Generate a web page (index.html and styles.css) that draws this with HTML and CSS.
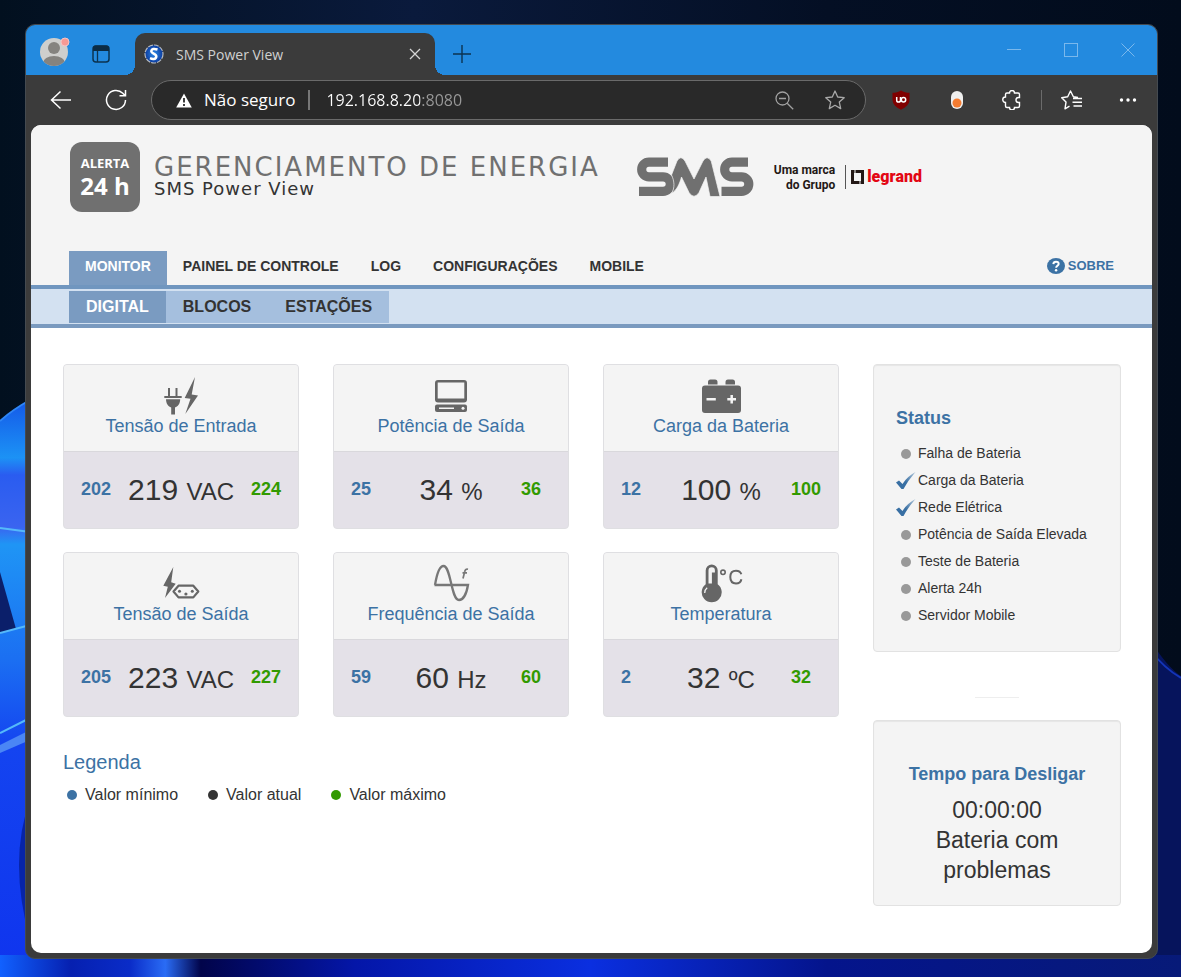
FILE: index.html
```html
<!DOCTYPE html>
<html lang="pt-BR">
<head>
<meta charset="utf-8">
<meta name="viewport" content="width=device-width, initial-scale=1">
<title>SMS Power View</title>
<link rel="stylesheet" href="styles.css">
</head>
<body>
<div class="desktop">
  <svg class="wallpaper" viewBox="0 0 1181 977" preserveAspectRatio="none" aria-hidden="true">
    <defs>
      <linearGradient id="night" x1="0" y1="0" x2="1" y2="0">
        <stop offset="0" stop-color="#02101f"/><stop offset=".35" stop-color="#0a1a3c"/><stop offset=".7" stop-color="#040f24"/><stop offset="1" stop-color="#020c1c"/>
      </linearGradient>
      <linearGradient id="petal" x1="0" y1="0" x2="0" y2="1">
        <stop offset="0" stop-color="#1458e8"/><stop offset=".1" stop-color="#1c92f5"/><stop offset=".13" stop-color="#2a5cf0"/><stop offset=".22" stop-color="#3a64f0"/><stop offset=".25" stop-color="#1f95f5"/><stop offset=".45" stop-color="#1b6ff2"/><stop offset=".6" stop-color="#1444f0"/><stop offset="1" stop-color="#0f34ee"/>
      </linearGradient>
      <linearGradient id="floor" x1="0" y1="0" x2="1" y2="0">
        <stop offset="0" stop-color="#1161ff"/><stop offset=".06" stop-color="#0620b0"/><stop offset=".11" stop-color="#0a2cc8"/><stop offset=".14" stop-color="#2a6cf5"/><stop offset=".17" stop-color="#01044a"/><stop offset=".3" stop-color="#0416a8"/><stop offset=".5" stop-color="#0a2fe0"/><stop offset=".7" stop-color="#04148c"/><stop offset="1" stop-color="#071a78"/>
      </linearGradient>
    </defs>
    <rect width="1181" height="977" fill="url(#night)"/>
    <path d="M0 421 Q12 410 30 400 V977 H0Z" fill="url(#petal)"/>
    <path d="M0 421 Q12 410 30 400" fill="none" stroke="#2f86f5" stroke-width="2"/>
    <path d="M0 572 L16 629 L0 633Z" fill="#0b1f6a"/>
    <path d="M0 528 L30 532 M0 633 L30 625 M0 733 L30 718" fill="none" stroke="#55b9fa" stroke-width="2"/>
    <path d="M0 745 L30 730 V740 L0 753Z" fill="#4a86f5"/>
    <path d="M30 800 Q8 860 30 940Z" fill="#0724a8"/>
    <path d="M1150 640 Q1168 668 1181 676 V977 H1150Z" fill="#06145c"/>
    <path d="M1150 650 Q1164 668 1181 678" fill="none" stroke="#1435b8" stroke-width="2"/>
    <rect y="955" width="1181" height="22" fill="url(#floor)"/>
  </svg>

  <div class="window">
    <header class="tab-strip">
      <button class="profile" aria-label="Perfil">
        <svg width="32" height="32" viewBox="0 0 32 32"><defs><clipPath id="face"><circle cx="15" cy="17" r="14"/></clipPath></defs><circle cx="15" cy="17" r="14" fill="#cfcfcd"/><g clip-path="url(#face)" fill="#85837f"><circle cx="15" cy="13" r="6"/><ellipse cx="15" cy="28" rx="11" ry="7"/></g><circle cx="26" cy="7" r="4" fill="#f79a94" stroke="#f6c4c4"/></svg>
      </button>
      <button class="workspaces" aria-label="Menu de guias">
        <svg width="20" height="20" viewBox="0 0 20 20"><rect x="2" y="2" width="16" height="16" rx="3" fill="none" stroke="#0c3350" stroke-width="1.5"/><path d="M2 7V4a2.500 2.500 0 0 1 2.500-2.500h11A2.500 2.500 0 0 1 18 4v3z" fill="#0c2c44"/><path d="M6.500 7v11" stroke="#0c3350" stroke-width="1.300"/></svg>
      </button>
      <div class="tab">
        <svg width="20" height="20" viewBox="0 0 20 20" aria-hidden="true"><defs><radialGradient id="fav"><stop offset="0" stop-color="#2d8be8"/><stop offset="1" stop-color="#0b3a9e"/></radialGradient></defs><circle cx="10" cy="10" r="9" fill="url(#fav)" stroke="#b4bac2" stroke-width="1.200" stroke-dasharray="5 1"/><path d="M13.500 5.500Q8 3.800 7.300 7c-.4 2.700 5.500 2.500 5 5.700-.5 2.900-4 2.600-6.300 1.500" fill="none" stroke="#fff" stroke-width="2.500"/></svg>
        <span class="tab-title">SMS Power View</span>
        <button class="tab-close" aria-label="Fechar guia"><svg width="12" height="12" viewBox="0 0 12 12"><path d="M1 1l10 10M11 1L1 11" stroke="#d5d5d5" stroke-width="1.300"/></svg></button>
      </div>
      <button class="new-tab" aria-label="Nova guia"><svg width="18" height="18" viewBox="0 0 18 18"><path d="M9 0v18M0 9h18" stroke="#0c3350" stroke-width="1.400"/></svg></button>
      <div class="window-buttons">
        <button aria-label="Minimizar"><svg width="14" height="14" viewBox="0 0 14 14"><path d="M0 6.500h14" stroke="#7ab8ec"/></svg></button>
        <button aria-label="Maximizar"><svg width="14" height="14" viewBox="0 0 14 14"><rect x=".5" y=".5" width="13" height="13" fill="none" stroke="#7ab8ec"/></svg></button>
        <button aria-label="Fechar"><svg width="14" height="14" viewBox="0 0 14 14"><path d="M.5.5l13 13M13.500.5l-13 13" stroke="#7ab8ec"/></svg></button>
      </div>
    </header>

    <div class="toolbar">
      <button class="back" aria-label="Voltar"><svg width="22" height="20" viewBox="0 0 22 20"><path d="M21 10H2M10.500 1.500L1.500 10l9 8.500" fill="none" stroke="#fff" stroke-width="1.500"/></svg></button>
      <button class="reload" aria-label="Recarregar"><svg width="22" height="22" viewBox="0 0 22 22"><path d="M20.500 11A9.500 9.500 0 1 1 17.800 4.300L20 6.500M20.500 1v5.800h-6" fill="none" stroke="#fff" stroke-width="1.500"/></svg></button>
      <div class="address">
        <svg width="16" height="15" viewBox="0 0 16 15" aria-hidden="true"><path d="M8 .5L15.800 14.500H.2z" fill="#fff"/><path d="M8 5v4.500M8 11v2" stroke="#292929" stroke-width="1.800"/></svg>
        <span class="insecure">Não seguro</span>
        <input class="url" type="text" value="192.168.8.20:8080" aria-label="Endereço">
        <button class="zoom-out" aria-label="Zoom"><svg width="19" height="19" viewBox="0 0 19 19"><g fill="none" stroke="#a0a0a0" stroke-width="1.300"><circle cx="7.500" cy="7.500" r="6.500"/><path d="M12.200 12.200l6 6M4 7.500h7"/></g></svg></button>
        <button class="favorite" aria-label="Adicionar aos favoritos"><svg width="20" height="20" viewBox="0 0 20 20"><path d="M10 1l2.700 6 6.500.7-4.900 4.400 1.400 6.500-5.700-3.300-5.700 3.300 1.400-6.500L.8 7.700 7.300 7z" fill="none" stroke="#a8a8a8" stroke-width="1.300" stroke-linejoin="round"/></svg></button>
      </div>
      <div class="extensions">
        <button aria-label="Bloqueador"><svg width="20" height="20" viewBox="0 0 20 20"><path d="M10 .5c2.500 1.800 5.500 2.300 8.500 2.300v6.700c0 5-4 8-8.500 10.200C5.500 17.500 1.500 14.500 1.500 9.500V2.800C4.500 2.800 7.500 2.300 10 .5z" fill="#800000"/><path d="M5.700 7v3.200a1.900 1.900 0 0 0 3.800 0V7" fill="none" stroke="#fff" stroke-width="1.500"/><circle cx="12.500" cy="9.700" r="2.200" fill="none" stroke="#fff" stroke-width="1.500"/></svg></button>
        <button aria-label="Extensão"><svg width="14" height="20" viewBox="0 0 14 20"><rect x="1" y="1" width="12" height="18" rx="6" fill="#efefef"/><circle cx="7" cy="13" r="4.500" fill="#f57c31"/></svg></button>
        <button aria-label="Extensões"><svg width="20" height="20" viewBox="0 0 20 20"><path d="M3.500 7V4.500a1.500 1.500 0 0 1 1.500-1.500h2.500a2.500 2.500 0 0 1 5 0H16a1.500 1.500 0 0 1 1.500 1.500V7.500h-1a2.300 2.300 0 0 0 0 5h1v3.500a1.500 1.500 0 0 1-1.500 1.500h-3.500a2.500 2.500 0 0 1-5 0H5A1.500 1.500 0 0 1 3.500 16v-3.500a2.500 2.500 0 0 1 0-5.500z" fill="none" stroke="#fff" stroke-width="1.400"/></svg></button>
        <span class="divider"></span>
        <button aria-label="Favoritos"><svg width="22" height="20" viewBox="0 0 22 20"><path d="M17 7.500l-4.600-.7L9.500 1 6.700 6.800l-6 .9 4.300 4.400L4 18.800l4.500-2.600M12 8.500h9M11.500 12.300H21M12.500 16H21" fill="none" stroke="#fff" stroke-width="1.400" stroke-linejoin="round"/></svg></button>
        <button aria-label="Configurações e mais"><svg width="18" height="4" viewBox="0 0 18 4"><g fill="#fff"><circle cx="2.500" cy="2" r="1.700"/><circle cx="9" cy="2" r="1.700"/><circle cx="15.500" cy="2" r="1.700"/></g></svg></button>
      </div>
    </div>

    <div class="page">
      <div class="masthead">
        <div class="branding">
          <div class="alert-badge"><span class="alert-word">ALERTA</span><span class="alert-hours">24 h</span></div>
          <div class="product"><span class="product-area">GERENCIAMENTO DE ENERGIA</span><h1 class="product-name">SMS Power View</h1></div>
          <svg class="sms-logo" width="117" height="40" viewBox="0 0 117 40" role="img" aria-label="SMS"><g fill="none" stroke="#707070" stroke-width="9.200"><path d="M31 5.200H12a7.300 7.300 0 0 0 0 14.600h14a7.300 7.300 0 0 1 0 14.600H2"/><path d="M111 5.200H95a7.300 7.300 0 0 0 0 14.600h9.500a7.300 7.300 0 0 1 0 14.600H84.500"/></g><path d="M34.500 36.500C38 31 37.500 24 34.500 18L40 4Q43.800 -2.500 48 4L57 22 66 4Q70 -2.500 74.200 4L83 39.500H73L69 20 62 35.500Q57 43 52 35.500L44.500 20C42.500 27 40 33 34.500 36.500z" fill="#707070" stroke="#f4f4f4" stroke-width=".7"/></svg>
          <div class="group"><span>Uma marca</span><span>do Grupo</span></div>
          <div class="legrand"><svg width="13" height="14" viewBox="0 0 13 14" aria-hidden="true"><path d="M1.500 1.500h10v11h-10z" fill="none" stroke="#231815" stroke-width="3"/><path d="M4 0v5M9 9v5" stroke="#f4f4f4"/></svg><span>legrand</span></div>
        </div>
        <nav class="main-nav" aria-label="Principal">
          <a class="active" href="#monitor">MONITOR</a><a href="#painel">PAINEL DE CONTROLE</a><a href="#log">LOG</a><a href="#config">CONFIGURAÇÕES</a><a href="#mobile">MOBILE</a>
          <a class="about" href="#sobre"><svg width="18" height="16" viewBox="0 0 18 16" aria-hidden="true"><ellipse cx="9" cy="8" rx="9" ry="8" fill="#3c72a4"/><path d="M6.300 6.200Q6.500 3.800 9 3.800q2.700 0 2.700 2.200c0 1.700-2.600 1.600-2.600 3.800" fill="none" stroke="#fff" stroke-width="1.900"/><circle cx="9.100" cy="12.200" r="1.200" fill="#fff"/></svg>SOBRE</a>
        </nav>
      </div>
      <nav class="sub-nav" aria-label="Monitor">
        <a class="active" href="#digital">DIGITAL</a><a href="#blocos">BLOCOS</a><a href="#estacoes">ESTAÇÕES</a>
      </nav>

      <main class="content">
        <div class="readings">
          <div class="cards">
            <section class="card">
              <div class="card-head"><svg width="48" height="40" viewBox="0 0 48 40" fill="#666" aria-hidden="true"><path d="M12 12v9M19.500 12v9" stroke="#666" stroke-width="2"/><path d="M7.300 21h17.400" stroke="#666" stroke-width="2"/><path d="M9 23.300h14.200c0 4.500-2.500 7.500-5.200 8.200v7h-3.800v-7C11.500 30.800 9 27.800 9 23.300z"/><path d="M38 1L27.700 22l5.800.8L28.300 38 41 19.600l-6.300-1.200z"/></svg><h2>Tensão de Entrada</h2></div>
              <div class="card-body"><span class="min">202</span><span class="now">219 <small>VAC</small></span><span class="max">224</span></div>
            </section>
            <section class="card">
              <div class="card-head"><svg width="48" height="40" viewBox="0 0 48 40" aria-hidden="true"><path d="M11 4h26a3 3 0 0 1 3 3v16.500a3 3 0 0 1-3 3H11a3 3 0 0 1-3-3V7a3 3 0 0 1 3-3zm-.3 2.500v16h26.600v-16z" fill="#666" fill-rule="evenodd"/><rect x="8" y="28.500" width="32" height="7.500" rx="2" fill="#666"/><path d="M12 32.200h15" stroke="#f4f4f4" stroke-width="1.500"/><circle cx="36" cy="32.200" r="1.500" fill="#f4f4f4"/></svg><h2>Potência de Saída</h2></div>
              <div class="card-body"><span class="min">25</span><span class="now">34 <small>%</small></span><span class="max">36</span></div>
            </section>
            <section class="card">
              <div class="card-head"><svg width="48" height="40" viewBox="0 0 48 40" aria-hidden="true"><rect x="5" y="9.500" width="39" height="27.500" rx="3" fill="#666"/><path d="M11 8.500V6a2.500 2.500 0 0 1 2.500-2.500h4.500A2.500 2.500 0 0 1 20.500 6v2.500zM28.500 8.500V6A2.500 2.500 0 0 1 31 3.500h4.500A2.500 2.500 0 0 1 38 6v2.500z" fill="#666"/><path d="M9.500 23.200h9.300M30.300 23.200H39M34.700 18.900v8.700" stroke="#f4f4f4" stroke-width="2.500"/></svg><h2>Carga da Bateria</h2></div>
              <div class="card-body"><span class="min">12</span><span class="now">100 <small>%</small></span><span class="max">100</span></div>
            </section>
            <section class="card">
              <div class="card-head"><svg width="48" height="40" viewBox="0 0 48 40" fill="#666" aria-hidden="true"><path d="M16.300 3L6.300 21.800l4.500.9L8 34l10.700-14.300-4.500-1.500z"/><path d="M21.500 21.700h14.800l5 5.800-5 5.900H21.500l-5-5.900z" fill="none" stroke="#666" stroke-width="2.200" stroke-linejoin="round"/><circle cx="22.500" cy="27.300" r="1.500"/><circle cx="28.900" cy="30" r="1.600"/><circle cx="35.300" cy="27.300" r="1.500"/></svg><h2>Tensão de Saída</h2></div>
              <div class="card-body"><span class="min">205</span><span class="now">223 <small>VAC</small></span><span class="max">227</span></div>
            </section>
            <section class="card">
              <div class="card-head"><svg width="48" height="40" viewBox="0 0 48 40" fill="none" stroke="#777" stroke-width="2.300" aria-hidden="true"><path d="M8 21C10 9 12.500 2 16.500 2 24 2 24 36 32 36c4 0 7.500-6 9-15H7.500"/><path d="M41 5.300q-2.600-.7-3.200 2L36 14.500M35.500 8.800h4.500" stroke-width="1.700"/></svg><h2>Frequência de Saída</h2></div>
              <div class="card-body"><span class="min">59</span><span class="now">60 <small>Hz</small></span><span class="max">60</span></div>
            </section>
            <section class="card">
              <div class="card-head"><svg width="48" height="40" viewBox="0 0 48 40" aria-hidden="true"><path d="M14.700.5a6 6 0 0 1 6 6v13.800a10 10 0 1 1-12 0V6.500a6 6 0 0 1 6-6z" fill="#666"/><path d="M11.500 19.500V6.500a3.200 3.200 0 0 1 6.400 0V8.500h-3V19.500" fill="#f4f4f4"/><path d="M7.700 29q0-3.500 2.500-5.300" fill="none" stroke="#f4f4f4" stroke-width="1.300"/><circle cx="26" cy="8.300" r="2.200" fill="none" stroke="#666" stroke-width="1.600"/><path d="M44.300 10.300Q43.300 6.700 39 6.700q-5.700 0-5.700 6.300t5.700 6.500q4.500 0 5.400-4.300" fill="none" stroke="#666" stroke-width="2"/></svg><h2>Temperatura</h2></div>
              <div class="card-body"><span class="min">2</span><span class="now">32 <small>ºC</small></span><span class="max">32</span></div>
            </section>
          </div>
          <section class="legend">
            <h2>Legenda</h2>
            <ul><li class="key-min">Valor mínimo</li><li class="key-now">Valor atual</li><li class="key-max">Valor máximo</li></ul>
          </section>
        </div>

        <aside class="sidebar">
          <section class="panel">
            <h2>Status</h2>
            <ul class="status-list">
              <li>Falha de Bateria</li>
              <li class="on"><svg width="20" height="18" viewBox="0 0 20 18" aria-hidden="true"><defs><linearGradient id="tick" x1="0" y1="1" x2="1" y2="0"><stop offset=".45" stop-color="#386fa3"/><stop offset="1" stop-color="#b3c8db"/></linearGradient></defs><path d="M0 10.500l3-2 3.500 3.500Q11 4.500 19.500 0 12 8.500 7.500 17H5.500z" fill="url(#tick)"/></svg>Carga da Bateria</li>
              <li class="on"><svg width="20" height="18" viewBox="0 0 20 18" aria-hidden="true"><path d="M0 10.500l3-2 3.500 3.500Q11 4.500 19.500 0 12 8.500 7.500 17H5.500z" fill="url(#tick)"/></svg>Rede Elétrica</li>
              <li>Potência de Saída Elevada</li>
              <li>Teste de Bateria</li>
              <li>Alerta 24h</li>
              <li>Servidor Mobile</li>
            </ul>
          </section>
          <hr>
          <section class="panel countdown">
            <h2>Tempo para Desligar</h2>
            <p>00:00:00</p>
            <p>Bateria com problemas</p>
          </section>
        </aside>
      </main>
    </div>
  </div>
</div>
</body>
</html>
```

FILE: styles.css
```css
* { box-sizing: border-box; }

body {
  margin: 0;
  font-family: "Liberation Sans", Arial, sans-serif;
  color: #333;
}

button {
  display: flex;
  align-items: center;
  justify-content: center;
  margin: 0;
  padding: 0;
  border: 0;
  background: none;
}

svg { display: block; flex: none; }
h1, h2, p, ul { margin: 0; padding: 0; }
ul { list-style: none; }
a { color: inherit; text-decoration: none; }

.desktop {
  position: relative;
  display: flex;
  min-height: 100vh;
  padding: 24px 23px 18px 25px;
  background: #04102a;
}

.wallpaper {
  position: absolute;
  inset: 0;
  width: 100%;
  height: 100%;
}

/* Browser window */
.window {
  position: relative;
  flex: 1;
  display: flex;
  flex-direction: column;
  border: 1px solid #444a50;
  border-radius: 10px;
  background: #3b3b3b;
  overflow: hidden;
  font-family: "Open Sans", "Noto Sans", sans-serif;
}

.tab-strip {
  display: flex;
  height: 50px;
  padding: 0 1px 0 13px;
  background: #238adf;
}

.profile { width: 32px; padding-top: 2px; }
.workspaces { width: 60px; margin-right: 4px; padding-top: 8px; }

.tab {
  position: relative;
  display: flex;
  align-items: center;
  width: 300px;
  margin-top: 8px;
  padding: 0 14px 0 9px;
  gap: 12px;
  border-radius: 10px 10px 0 0;
  background: #3b3b3b;
}

.tab::before,
.tab::after {
  content: "";
  position: absolute;
  bottom: 0;
  width: 10px;
  height: 10px;
}
.tab::before { left: -10px; background: radial-gradient(circle at 0 0, transparent 10px, #3b3b3b 10px); }
.tab::after { right: -10px; background: radial-gradient(circle at 100% 0, transparent 10px, #3b3b3b 10px); }

.tab-title { flex: 1; color: #d0d0d0; font-size: 14px; }
.new-tab { width: 53px; padding-top: 8px; }

.window-buttons { display: flex; margin-left: auto; }
.window-buttons button { width: 57px; }

.toolbar {
  display: flex;
  align-items: center;
  height: 50px;
  padding: 0 3px 0 24px;
}

.back { width: 22px; margin-right: 33px; }
.reload { width: 22px; margin-right: 24px; }

.address {
  flex: 1;
  display: flex;
  align-items: center;
  height: 40px;
  padding: 0 20px 0 24px;
  border: 1px solid #6a6a6a;
  border-radius: 20px;
  background: #292929;
  font-size: 17px;
}

.insecure {
  margin-left: 12px;
  padding-right: 13px;
  border-right: 2px solid #777;
  line-height: 20px;
  color: #fff;
}

.url {
  flex: 1;
  min-width: 0;
  padding: 0 0 0 16px;
  border: 0;
  outline: 0;
  font-family: inherit;
  font-size: 16px;
  color: transparent;
  background: linear-gradient(90deg, #fff 110px, #999 110px);
  -webkit-background-clip: text;
  background-clip: text;
}

.favorite { margin-left: 31px; }

.extensions {
  display: flex;
  align-items: center;
  padding-left: 20px;
}
.extensions button:nth-of-type(1) { width: 30px; margin-right: 14px; }
.extensions button:nth-of-type(2) { width: 53px; }
.extensions button:nth-of-type(3) { width: 58px; }
.divider { width: 1px; height: 20px; background: #6b6b6b; }
.extensions button:nth-of-type(4) { width: 60px; }
.extensions button:nth-of-type(5) { width: 52px; }

/* Web page */
.page {
  flex: 1;
  margin: 0 5px 5px;
  border-radius: 10px;
  background: #fff;
  overflow: hidden;
  font-family: "Liberation Sans", Arial, sans-serif;
}

.masthead {
  padding: 17px 38px 0;
  background: #f4f4f4;
  border-bottom: 4px solid #7096bf;
}

.branding {
  display: flex;
  align-items: center;
  height: 70px;
}

.alert-badge {
  display: flex;
  flex-direction: column;
  align-items: center;
  justify-content: center;
  width: 70px;
  height: 70px;
  margin-left: 1px;
  border-radius: 12px;
  background: #707070;
  color: #fff;
  font-family: "Open Sans", "Noto Sans", sans-serif;
  font-weight: 700;
}
.alert-word { font-size: 13px; line-height: 18px; }
.alert-hours { font-size: 24px; line-height: 28px; }

.product {
  display: flex;
  flex-direction: column;
  margin-left: 14px;
  font-family: "DejaVu Sans", Verdana, sans-serif;
  white-space: nowrap;
}
.product-area { font-size: 26px; line-height: 24px; letter-spacing: 2px; color: #707070; }
.product-name { font-size: 18px; line-height: 20px; letter-spacing: 1px; font-weight: 400; color: #333; }

.sms-logo { margin-left: 37px; }

.group {
  display: flex;
  flex-direction: column;
  align-items: flex-end;
  margin-left: 20px;
  padding: 1px 10px 0 0;
  font-family: Roboto, sans-serif;
  font-size: 12px;
  font-weight: 700;
  line-height: 15px;
  color: #231815;
  white-space: nowrap;
}

.legrand {
  display: flex;
  align-items: center;
  gap: 3px;
  padding-left: 5px;
  border-left: 1px solid #555;
  font-family: Roboto, sans-serif;
  font-size: 16px;
  font-weight: 900;
  line-height: 24px;
  color: #e30613;
}

.main-nav {
  display: flex;
  margin-top: 39px;
  font-size: 14px;
  font-weight: 700;
  line-height: 30px;
  white-space: nowrap;
}
.main-nav a { padding: 0 16px 4px; }
.main-nav .active,
.sub-nav .active { background: #7a9bc1; color: #fff; }
.main-nav .about {
  display: flex;
  align-items: center;
  gap: 3px;
  margin-left: auto;
  padding: 0 0 4px;
  font-size: 13px;
  color: #3c72a4;
}

.sub-nav {
  display: flex;
  padding: 2px 38px 1px;
  background: #d3e1f1;
  border-bottom: 4px solid #7a9abf;
  font-size: 16px;
  font-weight: 700;
  line-height: 32px;
}
.sub-nav a { padding: 0 17px; background: #a5bfde; }

.content {
  display: grid;
  grid-template-columns: 776fr 248fr;
  gap: 34px;
  padding: 36px 31px 47px 32px;
}

.cards {
  display: grid;
  grid-template-columns: repeat(3, 1fr);
  gap: 23px 34px;
}

.card {
  border: 1px solid #dfdfe2;
  border-radius: 4px;
  background: #e4e1e8;
  overflow: hidden;
}

.card-head {
  display: flex;
  flex-direction: column;
  align-items: center;
  height: 87px;
  padding-top: 11px;
  background: #f4f4f4;
  border-bottom: 1px solid #d9d8dc;
}
.card-head h2 { font-size: 18px; font-weight: 400; line-height: 20px; color: #3c72a4; }

.card-body {
  display: grid;
  grid-template-columns: 30px 1fr 30px;
  align-items: center;
  height: 76px;
  padding: 0 17px 1px;
  font-size: 18px;
  font-weight: 700;
}
.now { font-size: 30px; font-weight: 400; text-align: center; white-space: nowrap; }
.now small { font-size: 24px; }
.min { color: #3c72a4; }
.max { color: #329a00; }

.legend { margin-top: 33px; }
.legend h2 { font-size: 20px; font-weight: 400; line-height: 24px; color: #3c72a4; }
.legend ul { display: flex; gap: 30px; padding: 11px 0 0 4px; font-size: 16px; line-height: 20px; }
.legend li { display: flex; align-items: center; gap: 8px; }
.legend li::before { content: ""; width: 10px; height: 10px; border-radius: 5px; background: currentColor; }
.key-min::before { color: #3c72a4; }
.key-max::before { color: #329a00; }

.panel {
  padding: 42px 22px 22px;
  border: 1px solid #e2e2e2;
  border-radius: 4px;
  background: #f4f4f4;
  box-shadow: inset 0 1px 1px #e6e6e6;
}
.panel h2 { margin-bottom: 11px; font-size: 18px; line-height: 22px; color: #3c72a4; }

.status-list { font-size: 14px; line-height: 27px; white-space: nowrap; }
.status-list li { display: flex; align-items: center; gap: 7px; padding-left: 5px; }
.status-list li::before { content: ""; width: 10px; height: 10px; border-radius: 5px; background: #999; }
.status-list .on { gap: 2px; padding-left: 0; }
.status-list .on::before { content: none; }

.sidebar hr { width: 44px; height: 1px; margin: 45px auto 22px; border: 0; background: #eee; }

.countdown { padding-bottom: 20px; text-align: center; }
.countdown h2 { margin-bottom: 10px; }
.countdown p { padding: 0 24px; font-size: 23px; line-height: 30px; }
```
